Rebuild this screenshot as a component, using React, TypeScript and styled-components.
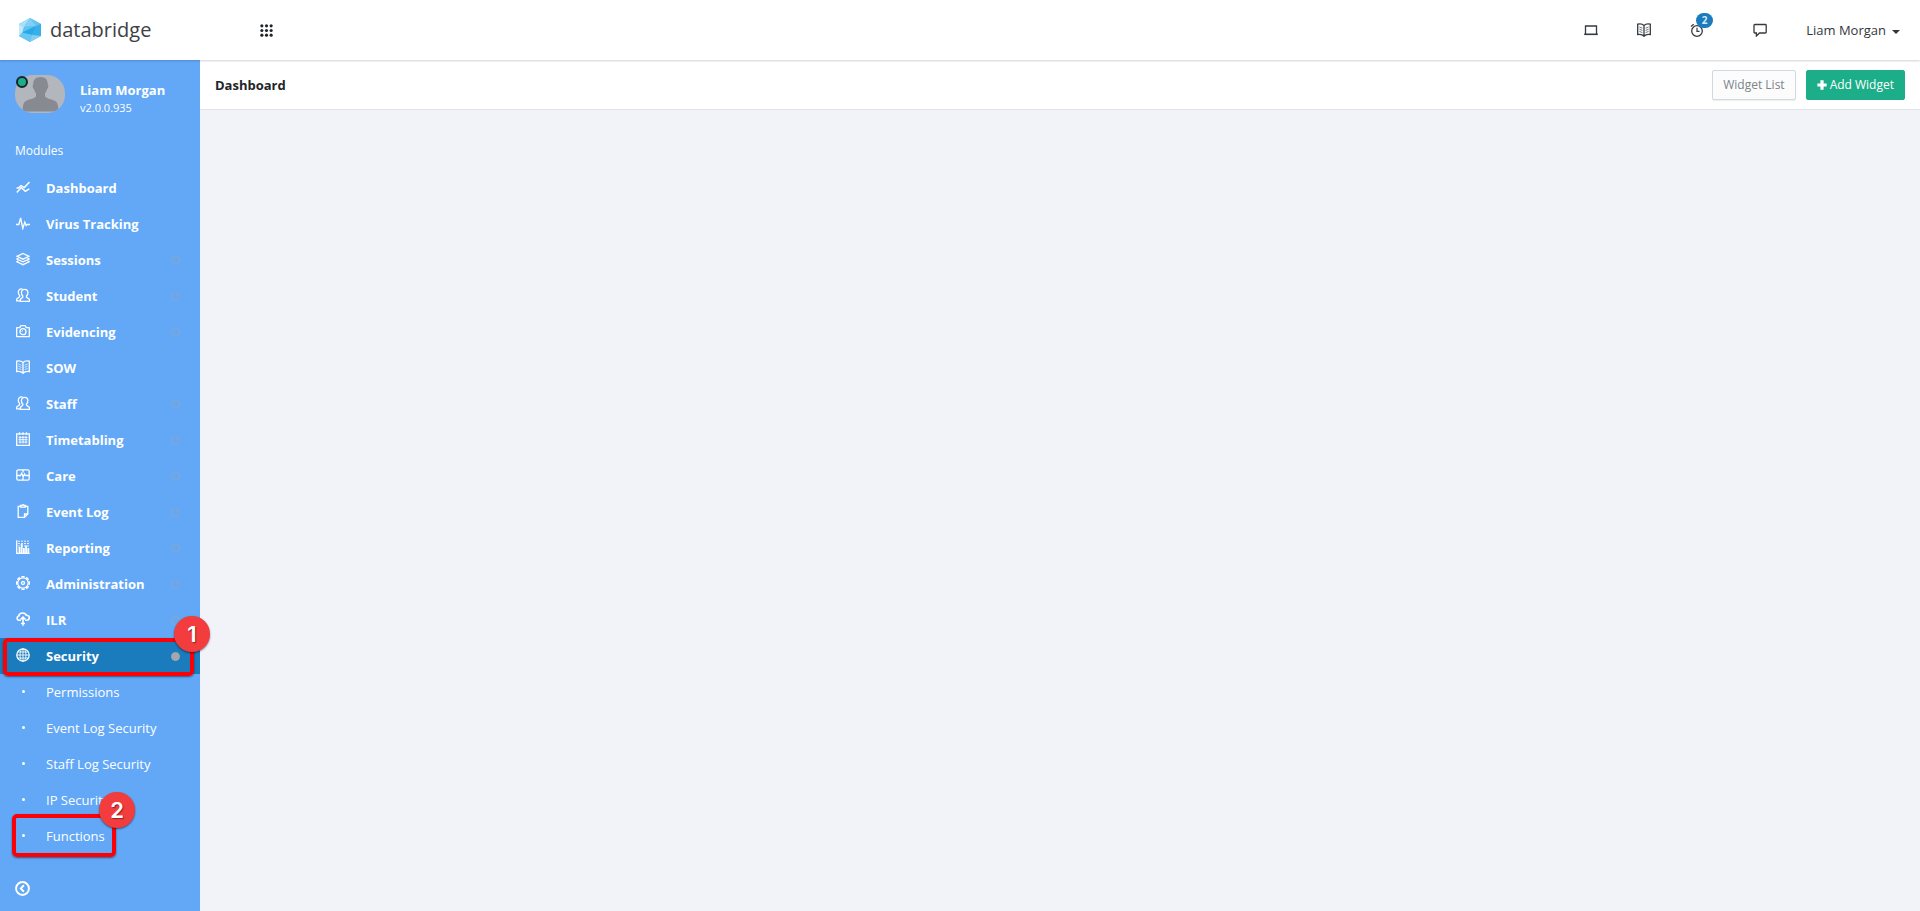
import React from "react";
import styled, { createGlobalStyle } from "styled-components";

const GlobalStyle = createGlobalStyle`
  *, *::before, *::after { box-sizing: border-box; }
  body {
    margin: 0;
    background: #f2f3f8;
    color: #212529;
    font: 400 13px/20px "Open Sans", "Liberation Sans", sans-serif;
  }
  button { font: inherit; color: inherit; cursor: pointer; }
  a { color: inherit; text-decoration: none; }
  svg { display: block; }
`;

const Page = styled.div`
  display: flex;
  flex-direction: column;
  min-height: 100vh;
`;

const TopBar = styled.header`
  display: flex;
  align-items: center;
  height: 60px;
  padding: 0 20px 0 18px;
  background: #fff;
  box-shadow: 0 1px 2px rgba(0, 0, 0, 0.18);
  position: relative;
`;

const Brand = styled.a`
  display: flex;
  align-items: center;
  gap: 8px;
  width: 242px;
  font-size: 20px;
  line-height: 28px;
  color: #3d4045;
`;

const PlainButton = styled.button`
  display: flex;
  align-items: center;
  padding: 0;
  border: 0;
  background: none;
`;

const TopActions = styled.div`
  display: flex;
  align-items: center;
  gap: 39px;
  margin-left: auto;
  color: #343a40;
`;

const AlertButton = styled(PlainButton)`
  position: relative;
  width: 24px;
`;

const AlertCount = styled.span`
  position: absolute;
  left: 6px;
  top: -10px;
  width: 17px;
  height: 15px;
  border-radius: 8px;
  background: #1a7bbd;
  color: #d6eafa;
  font-size: 10px;
  font-weight: 700;
  line-height: 15px;
  text-align: center;
`;

const UserMenu = styled(PlainButton)`
  gap: 6px;
  color: #33373c;
`;

const Caret = styled.span`
  border: 4px solid transparent;
  border-top-color: currentColor;
  border-bottom: 0;
  margin-top: 3px;
`;

const Body = styled.div`
  display: flex;
  flex: 1;
`;

const Sidebar = styled.aside`
  display: flex;
  flex-direction: column;
  flex: 0 0 200px;
  background: #62a8f7;
  color: #fff;
`;

const Profile = styled.div`
  display: flex;
  gap: 15px;
  padding: 15px 15px 0;
`;

const Avatar = styled.div`
  position: relative;
  width: 50px;
  height: 38px;
`;

const Status = styled.span`
  position: absolute;
  left: 1px;
  top: 1px;
  width: 12px;
  height: 12px;
  border: 2px solid #16242c;
  border-radius: 50%;
  background: #1bae88;
`;

const ProfileText = styled.div`
  display: flex;
  flex-direction: column;
  padding-top: 6px;
`;

const UserName = styled.strong`
  font-weight: 700;
  line-height: 18px;
`;

const Version = styled.span`
  font-size: 11px;
  line-height: 18px;
`;

const NavHeading = styled.h2`
  margin: 24px 0 9px;
  padding: 0 15px;
  font-size: 12px;
  font-weight: 400;
  line-height: 20px;
  color: #fff;
`;

const NavList = styled.ul`
  margin: 0;
  padding: 0;
  list-style: none;
`;

const NavItem = styled.li`
  position: relative;
`;

const NavLink = styled.a<{ $active?: boolean; $sub?: boolean }>`
  display: flex;
  align-items: center;
  height: 36px;
  padding: 0 20px 0 16px;
  font-weight: ${(p) => (p.$sub ? 400 : 700)};
  background: ${(p) => (p.$active ? "#1a7bbd" : "transparent")};
`;

const NavIcon = styled.span`
  display: flex;
  justify-content: center;
  width: 14px;
  margin-right: 16px;
  padding-bottom: 2px;
`;

const Bullet = styled.span`
  width: 3px;
  height: 3px;
  border-radius: 50%;
  background: #fff;
`;

const Toggle = styled.span<{ $filled?: boolean }>`
  width: 9px;
  height: 9px;
  margin-left: auto;
  border: 1px solid ${(p) => (p.$filled ? "#a4a8ad" : "#90a5bd")};
  border-radius: 50%;
  background: ${(p) => (p.$filled ? "#a4a8ad" : "transparent")};
`;

const SidebarFooter = styled.div`
  display: flex;
  align-items: center;
  height: 46px;
  margin-top: auto;
  padding: 0 15px;
`;

const Frame = styled.span<{ $wide?: boolean }>`
  position: absolute;
  z-index: 1;
  left: ${(p) => (p.$wide ? 3 : 12)}px;
  width: ${(p) => (p.$wide ? 191 : 104)}px;
  top: ${(p) => (p.$wide ? 0 : -4)}px;
  height: ${(p) => (p.$wide ? 38 : 43)}px;
  border: 4px solid #fb0007;
  border-radius: 5px;
  box-shadow: 0 1px 2px rgba(0, 0, 0, 0.5);
  pointer-events: none;
`;

const Step = styled.span<{ $wide?: boolean }>`
  position: absolute;
  right: ${(p) => (p.$wide ? -20 : -23)}px;
  top: -26px;
  width: 36px;
  height: 36px;
  border-radius: 50%;
  background: #f23c3e;
  box-shadow: 0 1px 2px rgba(0, 0, 0, 0.5);
  color: #fff;
  font-family: Inter, "Open Sans", sans-serif;
  font-size: 22px;
  font-weight: 600;
  line-height: 36px;
  text-align: center;
  text-shadow: 1px 1px 1px rgba(0, 0, 0, 0.4);
`;

const Main = styled.main`
  flex: 1;
  min-width: 0;
`;

const PageHeader = styled.div`
  display: flex;
  align-items: center;
  gap: 10px;
  height: 50px;
  padding: 0 15px;
  border-bottom: 1px solid #e1e4e8;
  background: #fff;
`;

const PageTitle = styled.h1`
  margin: 0 auto 0 0;
  font-size: 13px;
  font-weight: 700;
  line-height: 20px;
`;

const ActionButton = styled.button<{ $primary?: boolean }>`
  display: flex;
  align-items: center;
  gap: 3px;
  height: 30px;
  padding: 0 10px;
  border: 1px solid ${(p) => (p.$primary ? "#1bae88" : "#d1d8df")};
  border-radius: 2px;
  background: ${(p) => (p.$primary ? "#1bae88" : "#fcfcfd")};
  color: ${(p) => (p.$primary ? "#fff" : "#7b838b")};
  font-size: 12px;
  box-shadow: ${(p) => (p.$primary ? "none" : "0 1px 1px rgba(90, 90, 90, 0.1)")};
`;

type IconName =
  | "chart" | "pulse" | "layers" | "people" | "camera" | "book" | "calendar"
  | "care" | "clipboard" | "report" | "gear" | "cloud" | "globe" | "grid"
  | "laptop" | "alarm" | "chat" | "plus" | "back";

const gearTeeth = [0, 45, 90, 135, 180, 225, 270, 315];

const shapes: Record<IconName, React.ReactNode> = {
  chart: (
    <>
      <path d="M.5 8h1.800l2.700-2.500 3.300 2L13.500 2" strokeWidth="1.400" />
      <path d="m.8 12.500 4.500-5 4 3.800 4-2.500" strokeWidth="1.400" />
    </>
  ),
  pulse: <path d="M0 8.500h2.800L4.600 2 6.800 12.500l2-6.400 1.400 3.400.8-1h3" />,
  layers: (
    <>
      <path d="M7 1.500 13 4.300 7 7.200 1 4.300z" />
      <path d="M2.400 6.100.9 7l6.100 2.900L13.100 7l-1.500-.9M2.400 8.900.9 9.800 7 12.700l6.100-2.900-1.500-.9" />
    </>
  ),
  people: (
    <>
      <path d="M8.600 1.300c2.100 0 3.300 1.500 3.300 3.500 0 1.600-.6 2.600-1.400 3.300v1.100l3 2.200v1.900H4.300v-1.900l2.500-2.200V8.100c-.8-.7-1.400-1.700-1.400-3.300 0-2 1-3.500 3.200-3.500z" />
      <path d="M6.600 1.200C4 .3 2.300 1.900 2.300 4.300c0 1.500.6 2.400 1.300 3.100v1.300L.7 11v1.800h3.600" />
    </>
  ),
  camera: (
    <>
      <path d="M.7 3.700h3L4.900 1.700h4.200l1.200 2h3v8.900H.7z" strokeLinejoin="round" />
      <circle cx="7" cy="7.700" r="3" />
      <path d="M5.800 7.700A1.200 1.200 0 0 1 7 6.500" strokeWidth=".8" />
    </>
  ),
  book: (
    <>
      <path d="M.7 1.200C3 .6 5.400 1 7 2.400 8.600 1 11 .6 13.300 1.200v10.300c-2-.2-4 .1-5.300.9l-1 .9-1-.9c-1.300-.8-3.300-1.100-5.300-.9zM7 2.400v10.400" />
      <path d="m2.400 4 3 1.200m-3 1 3 1.200m-3 1 3 1.200M11.600 4l-3 1.200m3 1-3 1.200m3 1-3 1.200" strokeWidth=".7" />
    </>
  ),
  calendar: (
    <>
      <path d="M.7 1.900h12.600v11.400H.7z" />
      <path d="M3.500.200v2.500M7 .2v2.500M10.500.200v2.500" />
      <path d="M4 4v7.500M7 4v7.500M10 4v7.500M2.500 5.300h9M2.500 7.700h9M2.500 10.100h9" strokeWidth=".9" />
    </>
  ),
  care: (
    <>
      <rect x=".8" y="1.800" width="12.400" height="10.400" rx="1.500" />
      <path d="M.8 7.500h3.700l1.200-2.200L7.200 9l1.300-3 .9 1.500h3.800M7 2v2.500M7 12V9.800" />
    </>
  ),
  clipboard: (
    <>
      <path d="M4 2.300H2.200v11h6.300l3.300-3.300V2.300H10" />
      <path d="M8.500 13.300V10h3.300" />
      <path d="M4.500 1.500h1.300L7 .6l1.200.9h1.300v1.700h-5z" />
    </>
  ),
  report: (
    <>
      <path d="M.7.300v13.100h13" />
      <path d="M3.500 13V7M5.700 13V4M7.900 13V8M10.100 13V5.500M12.300 13V8" strokeWidth="1.800" />
      <path d="M2 1.200h12M2 3.600h12M2 6h12" strokeWidth=".9" strokeDasharray="2 1" />
    </>
  ),
  gear: (
    <>
      <circle cx="7" cy="7" r="5.200" strokeWidth="1.200" />
      {gearTeeth.map((a) => (
        <path key={a} d="M6 1.600V.6h2v1" transform={`rotate(${a} 7 7)`} />
      ))}
      <circle cx="7" cy="7" r="1.500" />
    </>
  ),
  cloud: (
    <>
      <path d="M5 8.300H3.100A2.200 2.200 0 0 1 2.700 4C3.100 2 4.700 1 6.600 1c1.800 0 3.200.9 3.700 2.300 1.700-.2 3 .8 3 2.500 0 1.500-1 2.500-2.500 2.500H9" strokeWidth="1.600" />
      <path d="M7 13.800V5.500M4.500 7.500 7 5.200l2.500 2.300" strokeWidth="1.600" />
      <path d="M5 11.500h4" />
    </>
  ),
  globe: (
    <>
      <circle cx="7" cy="7" r="6.200" />
      <ellipse cx="7" cy="7" rx="3" ry="6.200" strokeWidth=".9" />
      <path d="M7 .8v12.400M.8 7h12.400M1.700 4h10.600M1.700 10h10.600" strokeWidth=".9" />
    </>
  ),
  grid: (
    <g fill="currentColor" stroke="none">
      {[2, 7, 12].map((y) => [2, 7, 12].map((x) => <circle key={`${x}-${y}`} cx={x} cy={y} r="1.700" />))}
    </g>
  ),
  laptop: (
    <>
      <path d="M1.500 11V3h11v8" />
      <path d="M.2 11.300h13.600" strokeWidth="1.600" />
    </>
  ),
  alarm: (
    <>
      <circle cx="7" cy="8" r="5.300" />
      <path d="M7 4.800V8.300h2.500M1 3.500 3.700 1.200M13 3.500l-2.700-2.300" strokeWidth="1.200" />
    </>
  ),
  chat: <path d="M1.800 1.500h10.600q.8 0 .8.800v6.900q0 .8-.8.800H6.500L3.400 13V10H1.800q-.8 0-.8-.8V2.300q0-.8.8-.8z" />,
  plus: <path d="M7 .5v13M.5 7h13" strokeWidth="4.500" />,
  back: (
    <>
      <circle cx="7" cy="7" r="6" strokeWidth="1.800" />
      <path d="M8.300 4 5.400 7l2.900 3" strokeWidth="1.800" />
    </>
  ),
};

function Icon({ name, size = 14 }: { name: IconName; size?: number }) {
  return (
    <svg width={size} height={size} viewBox="0 0 14 14" fill="none" stroke="currentColor" strokeWidth="1.300" aria-hidden="true">
      {shapes[name]}
    </svg>
  );
}

function Logo() {
  return (
    <svg width="24" height="26" viewBox="0 0 24 26" aria-hidden="true">
      <path d="M12 1 23 7v12l-11 6L1 19V7z" fill="#4dbcee" />
      <path d="M12 1 1 7l5 3z" fill="#a9dff8" />
      <path d="m12 1 11 6-5 2z" fill="#64c4f0" />
      <path d="m12 1-6 9 12-1z" fill="#82d0f5" />
      <path d="m1 7 5 3-2 9-3 0z" fill="#c3e8fa" />
      <path d="m6 10 12-1-14 7z" fill="#5fc3f1" />
      <path d="M4 15.500 18 9l-4 9z" fill="#27a9e6" />
      <path d="m18 9 5-2v12l-9-1z" fill="#38afe8" />
      <path d="m4 15.500 10 2.500-2 7-11-6z" fill="#68c6f2" />
      <path d="m14 18 9 1-11 6z" fill="#83cff2" />
    </svg>
  );
}

function Portrait() {
  return (
    <svg width="50" height="38" viewBox="0 0 50 38" role="img" aria-label="Profile picture">
      <defs>
        <clipPath id="portrait">
          <rect width="50" height="38" rx="18" />
        </clipPath>
      </defs>
      <g clipPath="url(#portrait)">
        <path d="M0 0h50v38H0z" fill="#b3b7bd" />
        <path d="M25.500 2c5 0 7.500 3 7.300 7.500 1 .5.500 4-.7 4.500-.4 2-1.200 3.200-2.100 4.200v3.300c1.500 2.500 9.500 3 11.500 5.500 1.500 2 1.800 5 2 9.500H7.500c.2-4.500.5-7.500 2-9.500 2-2.500 10-3 11.500-5.500v-3.300c-.9-1-1.700-2.200-2.100-4.200-1.200-.5-1.700-4-.7-4.500C18 5 20.500 2 25.500 2z" fill="#878b91" />
      </g>
    </svg>
  );
}

const modules: { label: string; icon: IconName; toggle?: boolean }[] = [
  { label: "Dashboard", icon: "chart" },
  { label: "Virus Tracking", icon: "pulse" },
  { label: "Sessions", icon: "layers", toggle: true },
  { label: "Student", icon: "people", toggle: true },
  { label: "Evidencing", icon: "camera", toggle: true },
  { label: "SOW", icon: "book" },
  { label: "Staff", icon: "people", toggle: true },
  { label: "Timetabling", icon: "calendar", toggle: true },
  { label: "Care", icon: "care", toggle: true },
  { label: "Event Log", icon: "clipboard", toggle: true },
  { label: "Reporting", icon: "report", toggle: true },
  { label: "Administration", icon: "gear", toggle: true },
  { label: "ILR", icon: "cloud", toggle: true },
  { label: "Security", icon: "globe", toggle: true },
];

const securityPages = ["Permissions", "Event Log Security", "Staff Log Security", "IP Security", "Functions"];

export default function App() {
  return (
    <Page>
      <GlobalStyle />
      <TopBar>
        <Brand href="#">
          <Logo />
          databridge
        </Brand>
        <PlainButton aria-label="Apps"><Icon name="grid" size={13} /></PlainButton>
        <TopActions>
          <PlainButton aria-label="Display"><Icon name="laptop" /></PlainButton>
          <PlainButton aria-label="Guide"><Icon name="book" /></PlainButton>
          <AlertButton aria-label="Reminders">
            <Icon name="alarm" />
            <AlertCount>2</AlertCount>
          </AlertButton>
          <PlainButton aria-label="Messages"><Icon name="chat" /></PlainButton>
          <UserMenu>
            Liam Morgan
            <Caret />
          </UserMenu>
        </TopActions>
      </TopBar>
      <Body>
        <Sidebar>
          <Profile>
            <Avatar>
              <Portrait />
              <Status />
            </Avatar>
            <ProfileText>
              <UserName>Liam Morgan</UserName>
              <Version>v2.0.0.935</Version>
            </ProfileText>
          </Profile>
          <nav>
            <NavHeading>Modules</NavHeading>
            <NavList>
              {modules.map(({ label, icon, toggle }) => {
                const active = label === "Security";
                return (
                  <NavItem key={label}>
                    <NavLink href="#" $active={active}>
                      <NavIcon><Icon name={icon} /></NavIcon>
                      {label}
                      {toggle && <Toggle $filled={active} />}
                    </NavLink>
                    {active && <Frame $wide><Step $wide>1</Step></Frame>}
                  </NavItem>
                );
              })}
              {securityPages.map((label) => (
                <NavItem key={label}>
                  <NavLink href="#" $sub>
                    <NavIcon><Bullet /></NavIcon>
                    {label}
                  </NavLink>
                  {label === "Functions" && <Frame><Step>2</Step></Frame>}
                </NavItem>
              ))}
            </NavList>
          </nav>
          <SidebarFooter>
            <PlainButton aria-label="Collapse menu"><Icon name="back" size={15} /></PlainButton>
          </SidebarFooter>
        </Sidebar>
        <Main>
          <PageHeader>
            <PageTitle>Dashboard</PageTitle>
            <ActionButton>Widget List</ActionButton>
            <ActionButton $primary>
              <Icon name="plus" size={10} />
              Add Widget
            </ActionButton>
          </PageHeader>
        </Main>
      </Body>
    </Page>
  );
}
